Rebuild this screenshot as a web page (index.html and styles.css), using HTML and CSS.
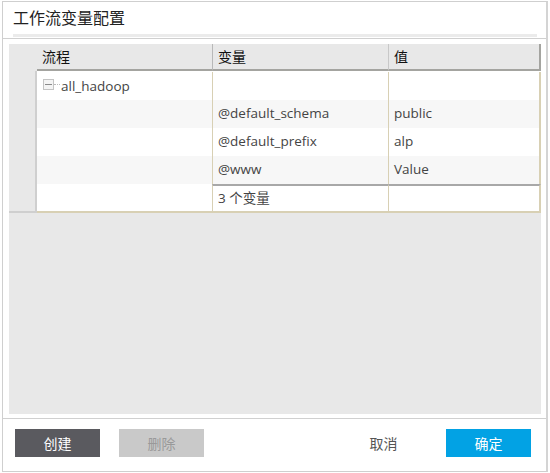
FILE: index.html
```html
<!DOCTYPE html>
<html lang="zh">
<head>
<meta charset="utf-8">
<title>工作流变量配置</title>
<link rel="stylesheet" href="styles.css">
</head>
<body>
<div class="dialog">
  <div class="title-bar">
    <div class="title">工作流变量配置</div>
  </div>
  <div class="body">
    <div class="grid">
      <div class="row head">
        <div class="rh"></div>
        <div class="cell c1">流程</div>
        <div class="cell c2">变量</div>
        <div class="cell c3">值</div>
      </div>
      <div class="rows">
        <div class="rh-col"></div>
        <div class="data">
          <div class="row r first">
            <div class="cell c1 tree"><span class="toggle"><span class="minus"></span></span><span class="dots"></span>all_hadoop</div>
            <div class="cell c2"></div>
            <div class="cell c3"></div>
          </div>
          <div class="row r alt">
            <div class="cell c1"></div>
            <div class="cell c2">@default_schema</div>
            <div class="cell c3">public</div>
          </div>
          <div class="row r">
            <div class="cell c1"></div>
            <div class="cell c2">@default_prefix</div>
            <div class="cell c3">alp</div>
          </div>
          <div class="row r alt">
            <div class="cell c1"></div>
            <div class="cell c2">@www</div>
            <div class="cell c3">Value</div>
          </div>
          <div class="row r summary">
            <div class="cell c1"></div>
            <div class="cell c2">3 个变量</div>
            <div class="cell c3"></div>
          </div>
        </div>
      </div>
    </div>
  </div>
  <div class="footer">
    <button class="btn dark">创建</button>
    <button class="btn disabled">删除</button>
    <span class="spacer"></span>
    <button class="btn plain">取消</button>
    <button class="btn primary">确定</button>
  </div>
</div>
</body>
</html>
```

FILE: styles.css
```css
* { box-sizing: border-box; }
html, body { margin: 0; padding: 0; background: #fff; }
body {
  font-family: "Open Sans", "Noto Sans CJK SC", sans-serif;
  width: 550px;
  height: 473px;
  overflow: hidden;
}
.dialog {
  margin: 1px 0 0 2px;
  width: 546px;
  height: 471px;
  border: 1px solid #cfcfcf;
  border-right: 2px solid #d4d4d4;
  display: flex;
  flex-direction: column;
  background: #fff;
}
.title-bar {
  height: 37px;
  border-bottom: 1px solid #d0d0d0;
  padding: 0 9px 0 10px;
}
.title {
  height: 35px;
  border-bottom: 3px solid #ebebeb;
  font-family: "Noto Sans CJK SC", sans-serif;
  font-size: 16px;
  line-height: 31px;
  color: #222;
}
.body {
  height: 379px;
  padding: 5px 5px 4px 6px;
}
.grid {
  background: #e8e8e8;
  height: 100%;
}
.row { display: flex; }
.head {
  height: 27px;
}
.head .rh { width: 28px; }
.head .cell {
  font-family: "Noto Sans CJK SC", sans-serif;
  font-size: 14px;
  color: #111;
  line-height: 24px;
  padding-left: 5px;
  border-bottom: 2px solid #a4a4a0;
}
.head .c2 { border-left: 1px solid #b8b8b8; }
.head .c3 { border-left: 1px solid #c8c8c8; border-right: 2px solid #a4a4a0; }
.c1 { width: 175px; }
.c2 { width: 176px; }
.c3 { width: 153px; }
.rows { display: flex; }
.rh-col {
  width: 28px;
  border-right: 2px solid #cfcfcf;
  border-bottom: 2px solid #cfcfcf;
  background: #e8e8e8;
}
.data {
  border-bottom: 2px solid #d8d0b4;
}
.r { height: 28px; background: #fff; }
.r.first { height: 29px; padding-top: 1px; background: #fff; }
.r.alt { background: #f7f7f7; }
.r .cell {
  font-size: 13.5px;
  color: #444;
  line-height: 27px;
  padding-left: 5px;
}
.r .c2 { border-left: 1px solid #d8d0b4; }
.r .c3 { border-left: 1px solid #d8d0b4; border-right: 2px solid #d8d0b4; }
.summary { height: 27px; }
.summary .c2, .summary .c3 { border-top: 2px solid #a8a8a8; line-height: 24px; }
.tree {
  display: flex;
  align-items: center;
  padding-left: 6px !important;
}
.toggle {
  width: 11px;
  height: 11px;
  border: 1px solid #c4c4c4;
  background: #f4f4f4;
  display: inline-flex;
  align-items: center;
  justify-content: center;
  margin-top: -4px;
}
.minus {
  width: 7px;
  height: 1px;
  background: #8a8a8a;
}
.dots {
  width: 6px;
  height: 1px;
  border-top: 1px dotted #bbb;
  margin-top: -4px;
  margin-right: 1px;
}
.footer {
  flex: 1;
  border-top: 1px solid #d0d0d0;
  display: flex;
  align-items: flex-start;
  padding: 10px 15px 0 12px;
}
.btn {
  width: 85px;
  height: 28px;
  border: none;
  font-family: "Noto Sans CJK SC", sans-serif;
  font-size: 14px;
  padding: 0;
  margin-right: 19px;
}
.dark { background: #5a5a5f; color: #fff; }
.disabled { background: #c9c9c9; color: #999; }
.spacer { flex: 1; }
.plain { background: transparent; color: #555; margin-right: 20px; }
.primary { background: #02a2e4; color: #fff; margin-right: 0; }
```
